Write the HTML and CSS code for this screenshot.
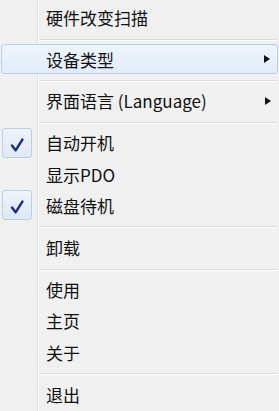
FILE: index.html
```html
<!DOCTYPE html>
<html lang="zh-CN">
<head>
<meta charset="utf-8">
<title>Menu</title>
<link rel="stylesheet" href="styles.css">
</head>
<body>
<div class="menu">
  <div class="item"><span class="label">硬件改变扫描</span></div>
  <div class="sep"></div>
  <div class="item hot"><span class="label">设备类型</span><span class="arrow"></span></div>
  <div class="sep"></div>
  <div class="item"><span class="label">界面语言 (Language)</span><span class="arrow"></span></div>
  <div class="sep"></div>
  <div class="item">
    <span class="check"><svg width="30" height="30" viewBox="0 0 30 30"><path d="M10 17.5 L13.6 22.3 L20.4 11.6" fill="none" stroke="#1f2f78" stroke-width="2.5" stroke-linecap="round" stroke-linejoin="round"/></svg></span>
    <span class="label">自动开机</span>
  </div>
  <div class="item"><span class="label">显示PDO</span></div>
  <div class="item">
    <span class="check"><svg width="30" height="30" viewBox="0 0 30 30"><path d="M10 17.5 L13.6 22.3 L20.4 11.6" fill="none" stroke="#1f2f78" stroke-width="2.5" stroke-linecap="round" stroke-linejoin="round"/></svg></span>
    <span class="label">磁盘待机</span>
  </div>
  <div class="sep"></div>
  <div class="item"><span class="label">卸载</span></div>
  <div class="sep"></div>
  <div class="item"><span class="label">使用</span></div>
  <div class="item"><span class="label">主页</span></div>
  <div class="item"><span class="label">关于</span></div>
  <div class="sep"></div>
  <div class="item"><span class="label">退出</span></div>
</div>
</body>
</html>
```
FILE: styles.css
```css
html, body {
  margin: 0;
  padding: 0;
  background: #f0f0f0;
}

.menu {
  width: 279px;
  height: 411px;
  box-sizing: border-box;
  padding-top: 2px;
  overflow: hidden;
  font-family: "Noto Sans CJK SC", "Noto Sans", sans-serif;
  font-size: 17px;
  color: #111111;
  background: linear-gradient(to right, #f0f0f0 0 37px, #dfe0e0 37px 38px, #ffffff 38px 39px, #f0f0f0 39px);
}

.item {
  height: 31.2px;
  box-sizing: border-box;
  display: grid;
  grid-template-columns: 46px 1fr 15px;
  align-items: center;
  line-height: 1;
}

.item .label {
  grid-column: 2;
  white-space: nowrap;
}

.item .check {
  grid-column: 1;
  grid-row: 1;
  margin-left: 2px;
  width: 30px;
  height: 30px;
  box-sizing: border-box;
  border: 1px solid #bccfe7;
  border-radius: 3px;
  background: linear-gradient(#eef3fa, #dfe8f5);
  display: flex;
}

.item .check svg {
  margin: -1px;
}

.item .arrow {
  grid-column: 3;
  width: 0;
  height: 0;
  margin-left: 1px;
  border-left: 6px solid #111;
  border-top: 4px solid transparent;
  border-bottom: 4px solid transparent;
}

.item.hot {
  margin: 3px 1px 0;
  height: 30px;
  grid-template-columns: 44px 1fr 14px;
  border: 1px solid #b4cfee;
  border-radius: 3px;
  background: linear-gradient(#eef4fb, #e2ecf8);
}

.sep {
  margin: 5.5px 2px 3.5px 40px;
  height: 1px;
  background: #dadada;
  border-bottom: 1px solid #ffffff;
}
```
